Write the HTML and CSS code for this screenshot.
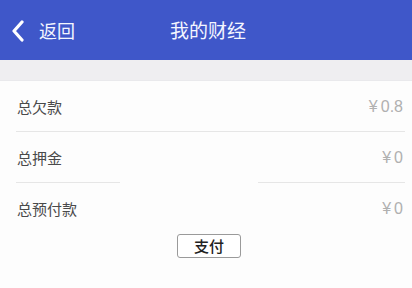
FILE: index.html
```html
<!DOCTYPE html>
<html lang="zh">
<head>
<meta charset="utf-8">
<link rel="stylesheet" href="styles.css">
</head>
<body>
<header class="bar">
  <div class="back">
    <svg class="chev" width="14" height="22" viewBox="0 0 14 22"><path d="M11 2 L3 11 L11 20" fill="none" stroke="#ffffff" stroke-width="3.2" stroke-linecap="round" stroke-linejoin="round"/></svg>
    <span class="back-text">返回</span>
  </div>
  <div class="title">我的财经</div>
</header>
<div class="band"></div>
<main class="list">
  <div class="row"><span class="label">总欠款</span><span class="value"><span class="cur">¥</span>0.8</span></div>
  <div class="sep"></div>
  <div class="row"><span class="label">总押金</span><span class="value"><span class="cur">¥</span>0</span></div>
  <div class="sep sep-gap"></div>
  <div class="row"><span class="label">总预付款</span><span class="value"><span class="cur">¥</span>0</span></div>
  <div class="actions"><button class="pay">支付</button></div>
</main>
</body>
</html>
```
FILE: styles.css
```css
html, body {
  margin: 0;
  padding: 0;
  background: #fdfdfd;
  font-family: "Noto Sans CJK SC", "Noto Sans", sans-serif;
}
.bar {
  height: 60px;
  background: #3f57c9;
  position: relative;
  display: flex;
  align-items: center;
  color: #f4f6ff;
}
.back {
  display: flex;
  align-items: center;
  padding-left: 11px;
  gap: 14px;
}
.chev { display: block; margin-top: 1px; }
.back-text {
  font-size: 18px;
  line-height: 20px;
}
.title {
  position: absolute;
  left: 0;
  right: 0;
  top: 0;
  height: 60px;
  line-height: 60px;
  text-align: center;
  font-size: 19px;
  padding-left: 4px;
}
.band {
  height: 20px;
  background: #efeef1;
  border-bottom: 1px solid #e9e9ec;
}
.list {
  display: flex;
  flex-direction: column;
}
.row {
  height: 50px;
  display: flex;
  align-items: center;
  justify-content: space-between;
  padding: 1px 9px 0 17px;
  box-sizing: border-box;
}
.label {
  font-size: 15px;
  color: #4a4a4a;
}
.value {
  font-size: 16px;
  color: #b0b0b0;
  font-family: "Liberation Sans", "Noto Sans CJK SC", sans-serif;
}
.cur {
  margin-right: 3px;
}
.sep {
  height: 1px;
  margin: 0 7px 0 16px;
  background: #e6e6e6;
}
.sep-gap {
  background: linear-gradient(to right, #e6e6e6 0, #e6e6e6 104px, transparent 104px, transparent 242px, #e6e6e6 242px);
}
.actions {
  display: flex;
  justify-content: center;
  padding-top: 1px;
  padding-left: 6px;
}
.pay {
  width: 64px;
  height: 24px;
  padding: 0;
  background: #ffffff;
  border: 1px solid #9a9a9a;
  border-radius: 3px;
  font-family: "Noto Sans CJK SC", sans-serif;
  font-size: 15px;
  font-weight: 500;
  color: #222;
  line-height: 22px;
}
```
